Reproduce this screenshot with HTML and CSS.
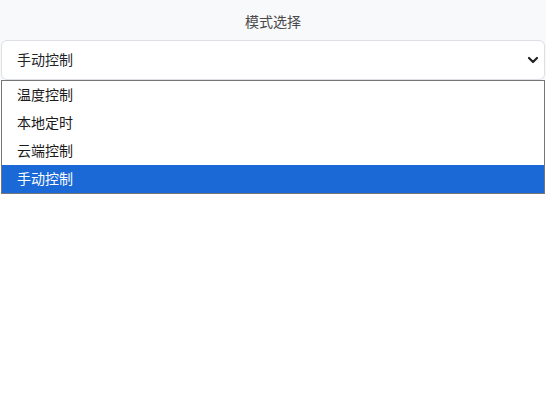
FILE: index.html
```html
<!DOCTYPE html>
<html lang="zh">
<head>
<meta charset="utf-8">
<link rel="stylesheet" href="styles.css">
</head>
<body>
<div class="page">
  <div class="header">
    <div class="title">模式选择</div>
    <div class="select-wrap">
      <div class="select">
        <span class="value">手动控制</span>
        <svg class="chev" width="12" height="10" viewBox="0 0 12 10"><path d="M2 3 L6 7 L10 3" fill="none" stroke="#222" stroke-width="2.2" stroke-linecap="round" stroke-linejoin="round"/></svg>
      </div>
      <ul class="menu">
        <li class="opt">温度控制</li>
        <li class="opt">本地定时</li>
        <li class="opt">云端控制</li>
        <li class="opt selected">手动控制</li>
      </ul>
    </div>
  </div>
</div>
</body>
</html>
```
FILE: styles.css
```css
html, body {
  margin: 0;
  padding: 0;
  background: #ffffff;
  font-family: "Noto Sans CJK SC", "Noto Sans", sans-serif;
}
.page {
  width: 546px;
  height: 400px;
}
.header {
  background: #f8f9fa;
  padding: 0 1px;
}
.title {
  height: 40px;
  line-height: 43px;
  text-align: center;
  font-size: 14px;
  color: #4a4a4a;
}
.select-wrap {
  position: relative;
}
.select {
  height: 38px;
  border: 1px solid #dcdfe3;
  border-radius: 6px;
  background: #fff;
  display: flex;
  align-items: center;
  justify-content: space-between;
  padding: 0 5px 0 15px;
  font-size: 14px;
  color: #212529;
}
.value {
  line-height: 36px;
  padding-bottom: 2px;
}
.chev {
  display: block;
}
.menu {
  position: absolute;
  left: 0;
  top: 40px;
  width: 542px;
  margin: 0;
  padding: 0;
  list-style: none;
  background: #fff;
  border: 1px solid #767676;
}
.opt {
  height: 26px;
  line-height: 26px;
  padding: 0 0 2px 15px;
  font-size: 14px;
  color: #1a1a1a;
}
.opt.selected {
  background: #1b69d6;
  color: #ffffff;
}
```
